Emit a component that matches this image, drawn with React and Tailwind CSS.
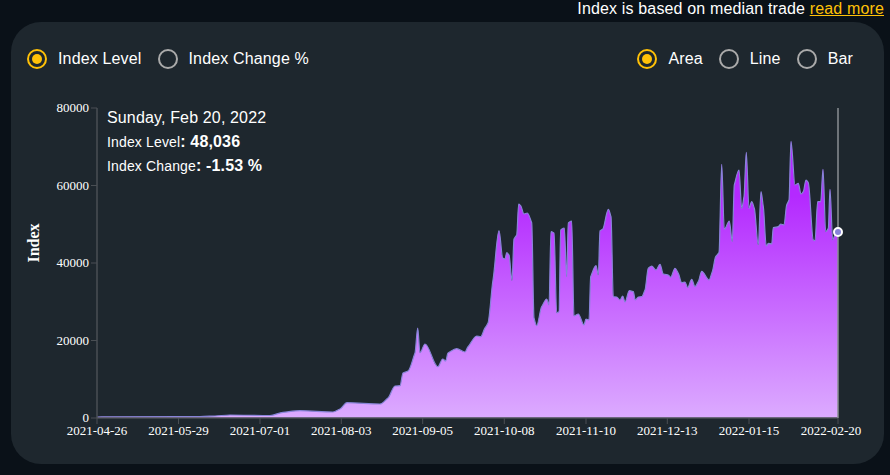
import React from 'react';

// traced chart outline, in page pixels
const points = [
  [97, 417], [110, 416.8], [200, 416.5], [215, 416], [230, 415], [270, 415.5], [283, 412.3], [300, 410.7], [333, 412], [340, 409], [347, 402.7],
  [380, 404], [388, 398], [395, 386], [400, 385.7], [403, 373], [408, 371], [415, 353], [417.7, 328], [420, 352.7], [425, 344], [438, 366.7],
  [442.7, 359], [445.7, 361], [448, 353], [456.7, 348.7], [465, 352], [468, 346.7], [476.7, 336], [480.7, 336.7], [485, 328], [488, 323],
  [493, 280], [499, 230.7], [502.7, 258], [505, 259], [506.7, 252.7], [509, 255], [512, 280.7], [514, 239], [516.7, 235], [518.7, 204],
  [520.7, 205.7], [524, 214], [527.3, 213], [531.7, 222.7], [534, 318], [536.7, 325.7], [541.7, 306.7], [546.7, 299], [549, 305], [551, 231.7],
  [554, 233], [556.7, 313], [559, 311.7], [560.7, 230], [564.3, 228], [566.7, 276.7], [568.3, 223], [571.7, 221], [574, 316], [578.3, 314],
  [584, 325], [586, 319], [589, 320], [590.7, 276.7], [596, 265.7], [598.3, 275], [600, 230.7], [602.7, 229.3], [608.3, 209.3], [611, 216.7],
  [613.3, 296.7], [616.7, 297], [620, 300], [622.7, 296], [625, 302], [629.3, 290.7], [633.3, 291.7], [635.3, 300], [638.3, 297], [641.7, 296.7],
  [645, 290], [648.3, 268.3], [651.7, 266], [656, 270], [660, 264.3], [663.3, 274], [668.3, 275], [670.7, 277.3], [675, 268.3], [678.3, 273.3],
  [681.7, 282.7], [685, 282], [687.7, 287.7], [691.7, 279.3], [695, 286.7], [698.3, 281.7], [701.7, 271.3], [709, 280], [712.3, 271.7],
  [715.7, 256.7], [719, 252.7], [721.7, 164.3], [724.3, 229.3], [729.3, 221], [732.3, 241.7], [734.3, 185], [739, 170], [741.7, 208.3], [744, 196.7],
  [746.3, 152.3], [749, 208.3], [751.7, 201.7], [754.3, 208.3], [758.3, 245], [761, 191.7], [763.3, 206.7], [766.3, 246], [768.3, 243.3],
  [771.7, 244], [773.3, 227.7], [778.3, 226.7], [780.7, 224], [784, 225], [786.7, 205], [789, 200], [791, 141.3], [795, 185], [798.3, 183.3],
  [801, 194], [803.3, 191.7], [806, 180], [808.3, 182.7], [813.3, 240], [815, 240.7], [817.7, 201.7], [820.7, 201.7], [823, 169.3], [825.7, 231.7],
  [828.3, 228.3], [830, 189.3], [832.7, 240], [835, 235], [838, 231.7],
];

// monotone cubic through the points so the peaks stay smooth and do not overshoot
const monotonePath = (pts) => {
  const slopes = pts.slice(1).map((p, i) => (p[1] - pts[i][1]) / (p[0] - pts[i][0]));
  const tangents = pts.map((_, i) => {
    if (i === 0) return slopes[0];
    if (i === pts.length - 1) return slopes[i - 1];
    if (slopes[i - 1] * slopes[i] <= 0) return 0;
    const h0 = pts[i][0] - pts[i - 1][0];
    const h1 = pts[i + 1][0] - pts[i][0];
    return (2 * slopes[i - 1] * slopes[i] * (h0 + h1)) / (slopes[i - 1] * (h0 + 2 * h1) + slopes[i] * (2 * h0 + h1));
  });
  let d = `M${pts[0][0]},${pts[0][1]}`;
  for (let i = 1; i < pts.length; i++) {
    const h = (pts[i][0] - pts[i - 1][0]) / 3;
    d += ` C${pts[i - 1][0] + h},${pts[i - 1][1] + tangents[i - 1] * h} ${pts[i][0] - h},${pts[i][1] - tangents[i] * h} ${pts[i][0]},${pts[i][1]}`;
  }
  return d;
};

const line = monotonePath(points);
const area = `${line} L838,418 L97,418 Z`;

const xTicks = [
  [97, 97, '2021-04-26'], [178.5, 178.5, '2021-05-29'], [260, 260, '2021-07-01'], [341.3, 341.3, '2021-08-03'], [422.7, 422.7, '2021-09-05'],
  [504.3, 504.3, '2021-10-08'], [586, 586, '2021-11-10'], [667.3, 667.3, '2021-12-13'], [749, 749, '2022-01-15'], [838, 831, '2022-02-20'],
];
const yTicks = [[108, '80000'], [185.5, '60000'], [263, '40000'], [340.5, '20000'], [418, '0']];

const Radio = ({ label, checked }) => (
  <div className="flex items-center gap-[11px]">
    <span className={`flex h-5 w-5 items-center justify-center rounded-full border-2 ${checked ? 'border-[#ffc107]' : 'border-[#aaaaaa]'}`}>
      {checked && <span className="h-[10px] w-[10px] rounded-full bg-[#ffc107]" />}
    </span>
    <span className="text-white">{label}</span>
  </div>
);

const Chart = () => (
  <svg viewBox="11 90 873 352" width="873" height="352" className="mt-[19px] block" style={{ fontFamily: '"Liberation Serif", serif', letterSpacing: 0 }}>
    <defs>
      <linearGradient id="areaFill" gradientUnits="userSpaceOnUse" x1="0" y1="141" x2="0" y2="418">
        <stop offset="0.2" stopColor="#b429ff" />
        <stop offset="1" stopColor="#dcabff" />
      </linearGradient>
    </defs>
    <path d={area} fill="url(#areaFill)" />
    <path d={line} fill="none" stroke="#8884d8" strokeWidth="1.2" />
    <line x1="97" y1="108" x2="97" y2="418" stroke="#4a4f54" strokeWidth="1.5" />
    <line x1="97" y1="418" x2="838" y2="418" stroke="#4a4f54" strokeWidth="1.5" />
    {yTicks.map(([y, label]) => (
      <g key={label}>
        <line x1="91" y1={y} x2="97" y2={y} stroke="#4a4f54" />
        <text x="89" y={y + 4} textAnchor="end" fontSize="13" fill="#fff">{label}</text>
      </g>
    ))}
    {xTicks.map(([x, labelX, label]) => (
      <g key={label}>
        <line x1={x} y1="418" x2={x} y2="424" stroke="#4a4f54" />
        <text x={labelX} y="435" textAnchor="middle" fontSize="13" fill="#fff">{label}</text>
      </g>
    ))}
    <text x="0" y="0" transform="translate(38.5 243) rotate(-90)" textAnchor="middle" fontSize="16" fontWeight="700" fill="#fff">Index</text>
    <line x1="838" y1="108" x2="838" y2="418" stroke="#8a8f93" strokeWidth="1.5" />
    <circle cx="838" cy="232" r="4" fill="#8884d8" stroke="#fff" strokeWidth="2" />
  </svg>
);

const App = () => {
  return (
    <div className="h-[475px] w-[890px] overflow-hidden bg-[#0a1118] font-['Liberation_Sans',sans-serif] text-base tracking-[0.15px]">
      <div className="h-[22px] pr-[6px] text-right leading-[18px] text-white">
        Index is based on median trade <a href="#" className="text-[#ffc107] underline">read more</a>
      </div>

      <div className="relative ml-[11px] h-[442px] w-[873px] rounded-[30px] bg-[#1e272e] pt-[25px]">
        <div className="flex justify-between pl-4 pr-[31px]">
          <div className="flex gap-4">
            <Radio label="Index Level" checked />
            <Radio label="Index Change %" />
          </div>
          <div className="flex gap-4">
            <Radio label="Area" checked />
            <Radio label="Line" />
            <Radio label="Bar" />
          </div>
        </div>

        <Chart />

        {/* tooltip sits over the chart */}
        <div className="absolute left-[96px] top-[85px] text-white">
          <div className="leading-[22px]">Sunday, Feb 20, 2022</div>
          <div className="mt-[1px] text-sm leading-6">Index Level<span className="text-base font-bold">: 48,036</span></div>
          <div className="text-sm leading-6">Index Change<span className="text-base font-bold">: -1.53 %</span></div>
        </div>
      </div>
    </div>
  );
};

export default App;
